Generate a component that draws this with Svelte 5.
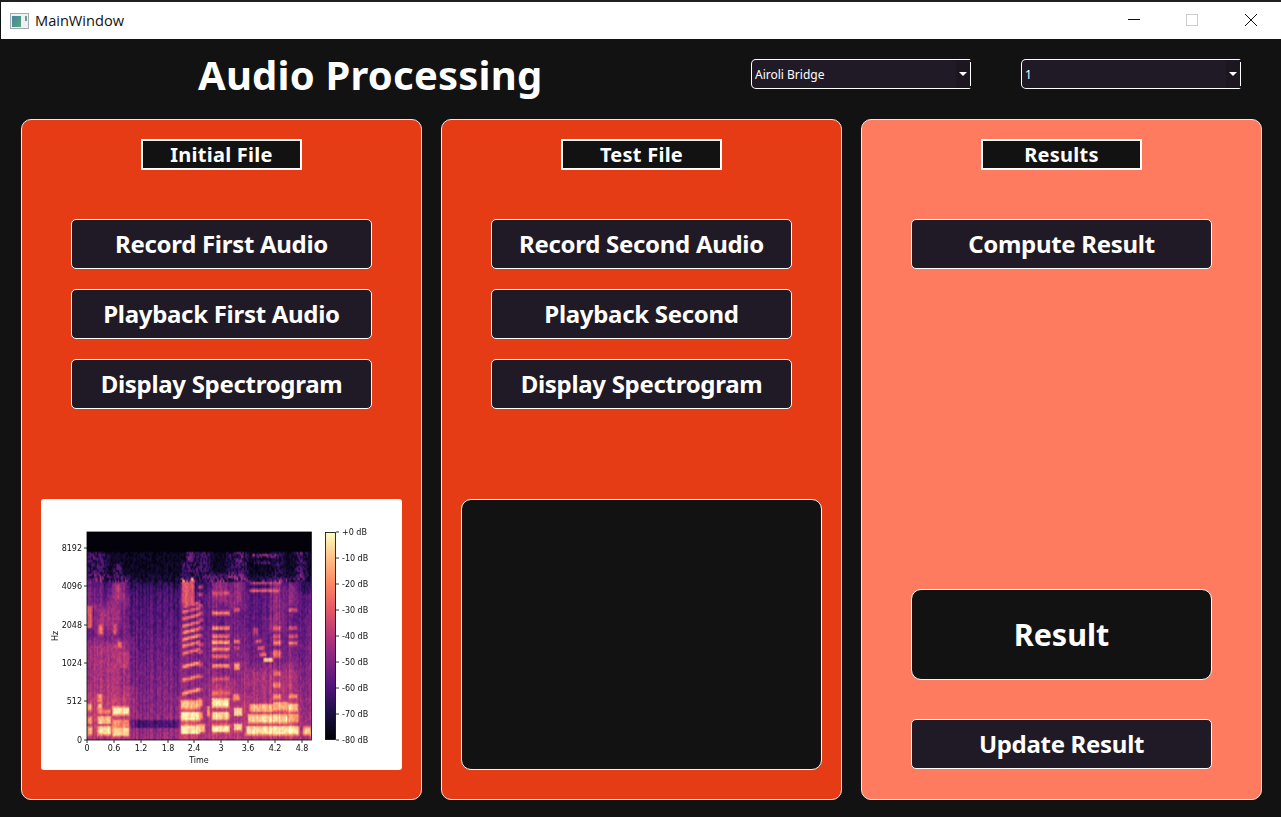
<script>
  import { onMount } from 'svelte';

  let canvas;

  const panels = [
    { title: 'Initial File', buttons: ['Record First Audio', 'Playback First Audio', 'Display Spectrogram'] },
    { title: 'Test File', buttons: ['Record Second Audio', 'Playback Second', 'Display Spectrogram'] }
  ];
  const yTicks = [['8192', 16], ['4096', 54], ['2048', 93], ['1024', 131], ['512', 169], ['0', 208]];
  const xTicks = [['0', 0], ['0.6', 27], ['1.2', 54], ['1.8', 81], ['2.4', 107], ['3', 134], ['3.6', 161], ['4.2', 188], ['4.8', 215]];
  const dbTicks = ['+0 dB', '-10 dB', '-20 dB', '-30 dB', '-40 dB', '-50 dB', '-60 dB', '-70 dB', '-80 dB'];

  const magma = [
    [0, 0, 0, 4], [0.13, 28, 16, 68], [0.25, 79, 18, 123], [0.38, 129, 37, 129], [0.5, 181, 54, 122],
    [0.63, 229, 89, 100], [0.75, 251, 135, 97], [0.88, 254, 194, 135], [1, 252, 253, 191]
  ];
  function color(v) {
    v = Math.max(0, Math.min(1, v));
    for (let i = 1; i < magma.length; i++) {
      if (v <= magma[i][0]) {
        const a = magma[i - 1], b = magma[i], t = (v - a[0]) / (b[0] - a[0]);
        return [1, 2, 3].map((k) => a[k] + (b[k] - a[k]) * t);
      }
    }
    return magma[8].slice(1);
  }

  const blobs = [];
  const L = (x0, y0, x1, y1, v, s = 0) => blobs.push({ x0: x0 / 3 - 2, x1: x1 / 3 - 2, y0: y0 / 3 - 4, y1: y1 / 3 - 4, v, s });
  const R = (x0, y0, x1, y1, v, s = 0) => blobs.push({ x0: x0 / 3 + 111, x1: x1 / 3 + 111, y0: y0 / 3 - 4, y1: y1 / 3 - 4, v, s });

  // left half of the recording
  [[8,72,20,150,.26],[25,70,35,150,.28],[48,68,58,150,.3],[85,105,115,150,.2],[305,72,330,100,.32],[288,100,345,150,.2],
   [4,150,22,235,.45],[40,150,52,230,.4],[85,160,118,220,.56],[6,235,22,300,.66],[36,240,80,300,.5],[85,235,110,300,.48],
   [290,150,328,230,.6],[40,290,55,320,.68],[85,290,95,320,.6],[98,340,112,360,.7],[75,350,100,365,.5],[100,370,130,420,.54],
   [0,340,130,500,.48],[0,490,135,625,.54],[8,527,20,548,.85],[8,567,22,588,.8],[8,597,22,621,.9],[38,498,50,522,.78],[38,527,50,545,.85],
   [38,545,78,558,.72],[38,565,78,588,.88],[38,595,78,621,.95],[83,537,132,561,.99],[83,575,132,595,.75],[83,597,132,625,.92],
   [288,520,345,625,.58],[288,517,345,543,.85],[288,552,345,578,.97],[288,592,345,618,.97]
  ].forEach((b) => L(...b));
  [[232,.6],[248,.66],[268,.7],[290,.72],[310,.76],[330,.78],[350,.74],[372,.7],[412,.82],[452,.74],[492,.82]]
    .forEach(([y, v]) => L(292, y, 345, y + 10, v, -0.25));

  // right half of the recording
  [[0,72,12,150,.28],[20,72,28,150,.3],[100,72,108,150,.28],[125,72,137,150,.42],[160,78,245,88,.34],[170,100,225,108,.28],
   [235,80,245,150,.28],[300,70,315,150,.38],[42,150,95,230,.44],[108,150,135,230,.48],[155,160,250,170,.55],[155,183,245,193,.68],
   [225,160,248,300,.5],[270,165,300,230,.44],[165,300,180,320,.55],[172,335,190,345,.65],[180,355,198,365,.7],[185,375,205,385,.75],
   [197,390,225,402,.9],[140,420,300,520,.49],[42,470,95,625,.55],[145,520,303,625,.56],
   [42,512,93,538,.98],[42,552,93,575,.92],[42,592,95,613,.98],[108,539,133,563,.92],[108,587,132,608,.92],[105,497,122,518,.72],
   [155,529,225,551,.88],[225,522,270,548,.84],[270,527,300,550,.9],[150,560,270,585,.94],[270,557,302,583,.8],[145,595,303,621,.98],
   [315,597,338,621,.9],[0,512,12,535,.85],[0,552,14,575,.82],[0,590,20,613,.9],[27,535,35,565,.8],[108,405,125,425,.78]
  ].forEach((b) => R(...b));
  [172,195,228,250,272,295,318,345,368,405,440,480].forEach((y) => R(0, y, 14, y + 10, 0.62));
  [[190,.6],[250,.75],[295,.72],[320,.72],[338,.85],[358,.78],[380,.68],[408,.78],[447,.62],[490,.68]]
    .forEach(([y, v]) => R(42, y, 95, y + 11, v));
  [[240,.6],[335,.72],[355,.55],[505,.75]].forEach(([y, v]) => R(108, y, 125, y + 11, v));
  [[295,.65],[320,.65],[338,.75],[365,.65],[375,.7],[430,.7],[465,.75],[500,.8]].forEach(([y, v]) => R(225, y, 248, y + 13, v));
  [[240,.6],[295,.6],[320,.6],[340,.72],[500,.78]].forEach(([y, v]) => R(272, y, 298, y + 11, v));

  function rng(seed) {
    return () => {
      seed = (seed + 0x6d2b79f5) | 0;
      let t = Math.imul(seed ^ (seed >>> 15), 1 | seed);
      t = (t + Math.imul(t ^ (t >>> 7), 61 | t)) ^ t;
      return ((t ^ (t >>> 14)) >>> 0) / 4294967296;
    };
  }

  function value(px, py) {
    if (py < 20) return 0.012;
    let v;
    if (py < 40) v = 0.07;
    else if (py < 62) v = 0.07 + ((py - 40) / 22) * 0.17;
    else v = 0.24 + ((py - 62) / 146) * 0.2;
    if ((px < 42 || px > 94) && py >= 62) v += 0.04;
    if (px > 42 && px < 94 && py > 188 && py < 196) v = 0.24;
    for (const b of blobs) {
      const y = py - b.s * (px - b.x0);
      const d = Math.min(px - b.x0, b.x1 - px, y - b.y0, b.y1 - y);
      const big = b.y1 - b.y0 > 18 && b.v < 0.6;
      const soft = big ? 7 : 1;
      if (d < -soft) continue;
      const e = Math.min(1, (d + soft) / (2 * soft));
      v = v + Math.max(0, b.v - v) * e;
    }
    return v;
  }

  onMount(() => {
    const W = 160, H = 104;
    const ctx = canvas.getContext('2d');
    const img = ctx.createImageData(W, H);
    const rand = rng(17);
    const colNoise = Array.from({ length: W }, () => (rand() - 0.5) * 0.13);
    for (let r = 0; r < H; r++) {
      for (let c = 0; c < W; c++) {
        const px = ((c + 0.5) / W) * 224, py = ((r + 0.5) / H) * 208;
        let v = value(px, py);
        if (py >= 50) v += colNoise[c] + (rand() - 0.5) * 0.12;
        else if (py >= 20) v = v * (0.1 + rand() * 1.5) + colNoise[c] * 0.2;
        const [cr, cg, cb] = color(v);
        const i = (r * W + c) * 4;
        img.data[i] = cr; img.data[i + 1] = cg; img.data[i + 2] = cb; img.data[i + 3] = 255;
      }
    }
    ctx.putImageData(img, 0, 0);
  });
</script>

<div class="window">
  <div class="strip"></div>
  <header class="titlebar">
    <svg class="appicon" width="20" height="16" viewBox="0 0 20 16">
      <defs>
        <linearGradient id="pane" x1="0" y1="0" x2="1" y2="1">
          <stop offset="0" stop-color="#3f86a8" />
          <stop offset="1" stop-color="#5fa574" />
        </linearGradient>
      </defs>
      <rect x="0.5" y="0.5" width="18" height="15" fill="#eef1f2" stroke="#a5abb0" />
      <rect x="2" y="3" width="9" height="11" fill="url(#pane)" />
      <rect x="15" y="3" width="2" height="5" fill="#6f9fa0" />
    </svg>
    <span class="apptitle">MainWindow</span>
    <div class="controls">
      <svg class="min" width="12" height="12" viewBox="0 0 12 12"><path d="M0 5.5H12" stroke="#111" fill="none" /></svg>
      <svg width="12" height="12" viewBox="0 0 12 12"><rect x="0.5" y="0.5" width="11" height="11" fill="none" stroke="#ccc" /></svg>
      <svg width="12" height="12" viewBox="0 0 12 12"><path d="M0 0L12 12M12 0L0 12" stroke="#111" fill="none" /></svg>
    </div>
  </header>

  <main class="main">
    <div class="head">
      <h1>Audio Processing</h1>
      <div class="combos">
        <div class="combo"><span>Airoli Bridge</span><i class="drop"><b></b></i></div>
        <div class="combo"><span>1</span><i class="drop"><b></b></i></div>
      </div>
    </div>

    <div class="panels">
      {#each panels as panel, idx}
        <section class="panel">
          <div class="label">{panel.title}</div>
          <div class="stack">
            {#each panel.buttons as text}
              <button>{text}</button>
            {/each}
          </div>
          {#if idx === 0}
            <figure class="figure">
              <canvas bind:this={canvas} width="160" height="104"></canvas>
              <svg width="361" height="271" viewBox="0 0 361 271">
                <defs>
                  <linearGradient id="cbar" x1="0" y1="0" x2="0" y2="1">
                    <stop offset="0" stop-color="#fcfdbf" />
                    <stop offset="0.12" stop-color="#fec287" />
                    <stop offset="0.25" stop-color="#fb8761" />
                    <stop offset="0.37" stop-color="#e55964" />
                    <stop offset="0.5" stop-color="#b5367a" />
                    <stop offset="0.62" stop-color="#812581" />
                    <stop offset="0.75" stop-color="#4f127b" />
                    <stop offset="0.87" stop-color="#1c1044" />
                    <stop offset="1" stop-color="#000004" />
                  </linearGradient>
                </defs>
                <rect x="46" y="33" width="224.5" height="208" fill="none" stroke="#000" stroke-width="0.8" />
                {#each yTicks as [label, y]}
                  <path d="M43 {33 + y}H46" stroke="#000" stroke-width="0.8" />
                  <text class="tick" x="41" y={35.5 + y} text-anchor="end">{label}</text>
                {/each}
                {#each xTicks as [label, x]}
                  <path d="M{46 + x} 241V244" stroke="#000" stroke-width="0.8" />
                  <text class="tick" x={46 + x} y="252" text-anchor="middle">{label}</text>
                {/each}
                <text class="tick" x="158" y="264" text-anchor="middle">Time</text>
                <text class="tick" transform="translate(17 137) rotate(-90)" text-anchor="middle">Hz</text>
                <rect x="284.5" y="33.5" width="10" height="207" fill="url(#cbar)" stroke="#000" stroke-width="0.8" />
                {#each dbTicks as label, i}
                  <path d="M295 {33 + i * 26}H298" stroke="#000" stroke-width="0.8" />
                  <text class="tick" x="301" y={35.5 + i * 26}>{label}</text>
                {/each}
              </svg>
            </figure>
          {:else}
            <div class="placeholder"></div>
          {/if}
        </section>
      {/each}

      <section class="panel results">
        <div class="label">Results</div>
        <div class="stack">
          <button>Compute Result</button>
        </div>
        <div class="result">Result</div>
        <button class="update">Update Result</button>
      </section>
    </div>
  </main>
</div>

<style>
  :global(body) {
    margin: 0;
    background: #121212;
  }
  .window {
    width: 1281px;
    height: 817px;
    overflow: hidden;
    display: flex;
    flex-direction: column;
    background: #121212;
    font-family: "Noto Sans", "DejaVu Sans", sans-serif;
    color: #fff;
  }
  .strip {
    height: 2px;
    background: #1f1f1f;
  }
  .titlebar {
    height: 37px;
    background: #fff;
    display: flex;
    align-items: center;
    margin-left: 1px;
    padding-left: 9px;
    flex: none;
  }
  .appicon {
    flex: none;
  }
  .apptitle {
    margin-left: 5px;
    margin-bottom: 2px;
    font-family: "Open Sans", sans-serif;
    font-size: 14.6px;
    color: #111;
  }
  .controls {
    margin-left: auto;
    display: flex;
    gap: 47px;
    padding-right: 24px;
    padding-bottom: 1px;
  }
  .min {
    margin-right: -1px;
  }
  .main {
    flex: 1;
    display: flex;
    flex-direction: column;
    padding: 0 19px 17px 21px;
  }
  .head {
    height: 80px;
    display: flex;
    align-items: center;
    flex: none;
  }
  h1 {
    margin: 0 0 8px 177px;
    font-size: 40px;
    line-height: 56px;
    font-weight: 700;
    letter-spacing: 0.2px;
  }
  .combos {
    margin-left: auto;
    margin-right: 21px;
    margin-top: -10px;
    display: flex;
    gap: 50px;
  }
  .combo {
    position: relative;
    width: 220px;
    height: 30px;
    box-sizing: border-box;
    border: 1px solid #fff;
    border-right-color: transparent;
    border-radius: 5px 2px 2px 5px;
    background: #201a26;
    display: flex;
    align-items: center;
    padding-left: 3px;
    font-size: 12px;
  }
  .combo::after {
    content: "";
    position: absolute;
    right: -1px;
    top: 2px;
    bottom: 2px;
    width: 1px;
    background: #fff;
  }
  .drop {
    position: absolute;
    right: 0;
    top: 0;
    bottom: 0;
    width: 14px;
    background: #1b1620;
    display: flex;
    align-items: center;
    justify-content: center;
  }
  .drop b {
    width: 0;
    height: 0;
    border-left: 4px solid transparent;
    border-right: 4px solid transparent;
    border-top: 4px solid #fff;
  }
  .panels {
    flex: 1;
    display: flex;
    gap: 19px;
  }
  .panel {
    width: 401px;
    box-sizing: border-box;
    border: 1px solid #f4e6e2;
    border-radius: 10px;
    background: #e63c15;
    display: flex;
    flex-direction: column;
    align-items: center;
    padding: 19px 0 29px;
  }
  .results {
    background: #ff7b5f;
  }
  .label {
    width: 161px;
    height: 31px;
    box-sizing: border-box;
    border: 2px solid #fff;
    background: #121212;
    display: flex;
    align-items: center;
    justify-content: center;
    font-size: 20px;
    font-weight: 700;
    letter-spacing: 0.25px;
  }
  .stack {
    margin-top: 49px;
    display: flex;
    flex-direction: column;
    gap: 20px;
  }
  button {
    width: 301px;
    height: 50px;
    box-sizing: border-box;
    border: 1px solid #fff;
    border-radius: 5px;
    background: #201a26;
    color: #fff;
    font: 700 24px "Noto Sans", "DejaVu Sans", sans-serif;
    letter-spacing: -0.3px;
    padding: 0 0 2px;
  }
  .figure {
    position: relative;
    margin: auto 0 0;
    width: 361px;
    height: 271px;
    background: #fff;
    border-radius: 3px;
  }
  .figure canvas {
    position: absolute;
    left: 46px;
    top: 33px;
    width: 224px;
    height: 208px;
  }
  .figure svg {
    position: relative;
    display: block;
  }
  .tick {
    font: 8px "DejaVu Sans", sans-serif;
    fill: #111;
  }
  .placeholder {
    margin-top: auto;
    width: 361px;
    height: 271px;
    box-sizing: border-box;
    border: 1px solid #fff;
    border-radius: 10px;
    background: #121212;
  }
  .result {
    margin-top: auto;
    width: 301px;
    height: 91px;
    box-sizing: border-box;
    border: 1px solid #fff;
    border-radius: 10px;
    background: #121212;
    display: flex;
    align-items: center;
    justify-content: center;
    padding-bottom: 2px;
    font-size: 30.5px;
    font-weight: 700;
  }
  .update {
    margin-top: 39px;
    margin-bottom: 1px;
  }
</style>
